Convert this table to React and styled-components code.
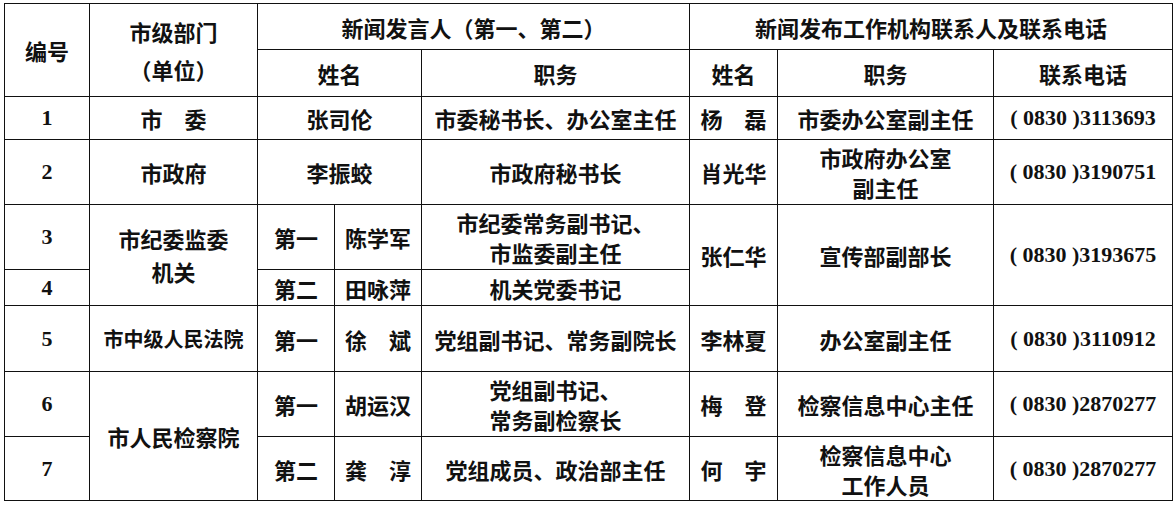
import React from 'react'
import styled, { createGlobalStyle } from 'styled-components'

const GlobalStyle = createGlobalStyle`
  html, body {
    margin: 0;
    padding: 0;
    background: #fff;
  }
`

const cjk = `"Noto Sans CJK SC", "Noto Sans", sans-serif`
const serif = `"Liberation Serif", "Times New Roman", serif`

const Page = styled.div`
  padding: 3px 0 0 4px;
  width: 1176px;
  height: 506px;
  box-sizing: border-box;
  background: #fff;
`

const Sheet = styled.table`
  border-collapse: collapse;
  table-layout: fixed;
  width: 1168px;
  color: #111;
`

const Col = styled.col`
  width: ${p => p.$w}px;
`

const Row = styled.tr`
  height: ${p => p.$h}px;
`

const Cell = styled.td`
  border: 1px solid #111;
  padding: 0;
  text-align: center;
  vertical-align: middle;
  font-family: ${p => (p.$num ? serif : cjk)};
  font-weight: 700;
  font-size: ${p => p.$size || 22}px;
  line-height: ${p => p.$lh || 30}px;
  white-space: nowrap;
`

const HeadCell = styled(Cell).attrs({ as: 'th' })`
  line-height: 38px;
`

const Phone = ({ children }) => <Cell $num>( 0830 ){children}</Cell>

export default function App() {
  return (
    <Page>
      <GlobalStyle />
      <Sheet>
        <colgroup>
          <Col $w={85} />
          <Col $w={168} />
          <Col $w={77} />
          <Col $w={87} />
          <Col $w={268} />
          <Col $w={88} />
          <Col $w={216} />
          <Col $w={179} />
        </colgroup>
        <thead>
          <Row $h={46}>
            <HeadCell rowSpan={2}>编号</HeadCell>
            <HeadCell rowSpan={2}>市级部门<br />（单位）</HeadCell>
            <HeadCell colSpan={3}>新闻发言人（第一、第二）</HeadCell>
            <HeadCell colSpan={3}>新闻发布工作机构联系人及联系电话</HeadCell>
          </Row>
          <Row $h={47}>
            <HeadCell colSpan={2}>姓名</HeadCell>
            <HeadCell>职务</HeadCell>
            <HeadCell>姓名</HeadCell>
            <HeadCell>职务</HeadCell>
            <HeadCell>联系电话</HeadCell>
          </Row>
        </thead>
        <tbody>
          <Row $h={43}>
            <Cell $num>1</Cell>
            <Cell>市　委</Cell>
            <Cell colSpan={2}>张司伦</Cell>
            <Cell>市委秘书长、办公室主任</Cell>
            <Cell>杨　磊</Cell>
            <Cell>市委办公室副主任</Cell>
            <Phone>3113693</Phone>
          </Row>
          <Row $h={65}>
            <Cell $num>2</Cell>
            <Cell>市政府</Cell>
            <Cell colSpan={2}>李振蛟</Cell>
            <Cell>市政府秘书长</Cell>
            <Cell>肖光华</Cell>
            <Cell>市政府办公室<br />副主任</Cell>
            <Phone>3190751</Phone>
          </Row>
          <Row $h={65}>
            <Cell $num>3</Cell>
            <Cell rowSpan={2} $lh={33}>市纪委监委<br />机关</Cell>
            <Cell>第一</Cell>
            <Cell>陈学军</Cell>
            <Cell>市纪委常务副书记、<br />市监委副主任</Cell>
            <Cell rowSpan={2}>张仁华</Cell>
            <Cell rowSpan={2}>宣传部副部长</Cell>
            <Cell $num rowSpan={2}>( 0830 )3193675</Cell>
          </Row>
          <Row $h={36}>
            <Cell $num>4</Cell>
            <Cell>第二</Cell>
            <Cell>田咏萍</Cell>
            <Cell>机关党委书记</Cell>
          </Row>
          <Row $h={66}>
            <Cell $num>5</Cell>
            <Cell $size={20}>市中级人民法院</Cell>
            <Cell>第一</Cell>
            <Cell>徐　斌</Cell>
            <Cell>党组副书记、常务副院长</Cell>
            <Cell>李林夏</Cell>
            <Cell>办公室副主任</Cell>
            <Phone>3110912</Phone>
          </Row>
          <Row $h={65}>
            <Cell $num>6</Cell>
            <Cell rowSpan={2}>市人民检察院</Cell>
            <Cell>第一</Cell>
            <Cell>胡运汉</Cell>
            <Cell>党组副书记、<br />常务副检察长</Cell>
            <Cell>梅　登</Cell>
            <Cell>检察信息中心主任</Cell>
            <Phone>2870277</Phone>
          </Row>
          <Row $h={64}>
            <Cell $num>7</Cell>
            <Cell>第二</Cell>
            <Cell>龚　淳</Cell>
            <Cell>党组成员、政治部主任</Cell>
            <Cell>何　宇</Cell>
            <Cell>检察信息中心<br />工作人员</Cell>
            <Phone>2870277</Phone>
          </Row>
        </tbody>
      </Sheet>
    </Page>
  )
}
